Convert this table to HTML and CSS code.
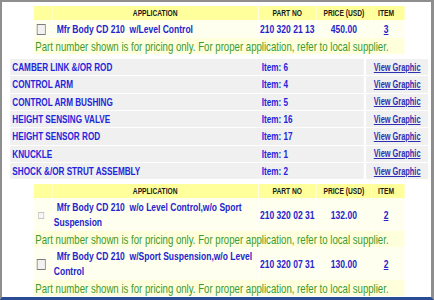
FILE: index.html
```html
<!DOCTYPE html>
<html>
<head>
<meta charset="utf-8">
<link rel="stylesheet" href="styles.css">
</head>
<body>
<div class="frame">
 <div class="squeeze">
  <table class="parts">
    <tr class="head">
      <td class="c-chk"></td>
      <td class="c-app">APPLICATION</td>
      <td class="c-pn">PART NO</td>
      <td class="c-pr">PRICE (USD)</td>
      <td class="c-it">ITEM</td>
    </tr>
    <tr class="prod">
      <td class="c-chk"><span class="box"></span></td>
      <td class="c-app">Mfr Body CD 210&nbsp; w/Level Control</td>
      <td class="c-pn">210 320 21 13</td>
      <td class="c-pr">450.00</td>
      <td class="c-it"><a href="#">3</a></td>
    </tr>
    <tr class="note">
      <td colspan="5">Part number shown is for pricing only. For proper application, refer to local supplier.</td>
    </tr>
  </table>

  <table class="list">
    <tr><td class="l-name">CAMBER LINK &amp;/OR ROD</td><td class="l-item">Item: 6</td><td class="l-view"><a href="#">View Graphic</a></td></tr>
    <tr><td class="l-name">CONTROL ARM</td><td class="l-item">Item: 4</td><td class="l-view"><a href="#">View Graphic</a></td></tr>
    <tr><td class="l-name">CONTROL ARM BUSHING</td><td class="l-item">Item: 5</td><td class="l-view"><a href="#">View Graphic</a></td></tr>
    <tr><td class="l-name">HEIGHT SENSING VALVE</td><td class="l-item">Item: 16</td><td class="l-view"><a href="#">View Graphic</a></td></tr>
    <tr><td class="l-name">HEIGHT SENSOR ROD</td><td class="l-item">Item: 17</td><td class="l-view"><a href="#">View Graphic</a></td></tr>
    <tr><td class="l-name">KNUCKLE</td><td class="l-item">Item: 1</td><td class="l-view"><a href="#">View Graphic</a></td></tr>
    <tr><td class="l-name">SHOCK &amp;/OR STRUT ASSEMBLY</td><td class="l-item">Item: 2</td><td class="l-view"><a href="#">View Graphic</a></td></tr>
  </table>

  <table class="parts second">
    <tr class="head">
      <td class="c-chk"></td>
      <td class="c-app">APPLICATION</td>
      <td class="c-pn">PART NO</td>
      <td class="c-pr">PRICE (USD)</td>
      <td class="c-it">ITEM</td>
    </tr>
    <tr class="prod tall">
      <td class="c-chk"><span class="box faint"></span></td>
      <td class="c-app">Mfr Body CD 210&nbsp; w/o Level Control,w/o Sport Suspension</td>
      <td class="c-pn">210 320 02 31</td>
      <td class="c-pr">132.00</td>
      <td class="c-it"><a href="#">2</a></td>
    </tr>
    <tr class="note">
      <td colspan="5">Part number shown is for pricing only. For proper application, refer to local supplier.</td>
    </tr>
    <tr class="prod tall">
      <td class="c-chk"><span class="box"></span></td>
      <td class="c-app">Mfr Body CD 210&nbsp; w/Sport Suspension,w/o Level Control</td>
      <td class="c-pn">210 320 07 31</td>
      <td class="c-pr">130.00</td>
      <td class="c-it"><a href="#">2</a></td>
    </tr>
    <tr class="note">
      <td colspan="5">Part number shown is for pricing only. For proper application, refer to local supplier.</td>
    </tr>
  </table>
 </div>
</div>
</body>
</html>
```
FILE: styles.css
```css
html, body {
  margin: 0;
  padding: 0;
  background: #ffffff;
}
body {
  font-family: "Liberation Sans", Arial, sans-serif;
}
.frame {
  width: 434px;
  height: 300px;
  box-sizing: border-box;
  border-top: 2px solid #8e8e8e;
  border-left: 2px solid #8e8e8e;
  border-right: 3px solid #8e8e8e;
  border-bottom: 3px solid #2a4c94;
  padding-top: 4px;
  overflow: hidden;
}
/* the reference is horizontally condensed: squeeze the whole content */
.squeeze {
  width: 580px;
  transform: scaleX(0.74);
  transform-origin: 0 0;
}
table {
  border-collapse: separate;
  table-layout: fixed;
}
.parts {
  margin-left: 42px;
  width: 503px;
  border-spacing: 1px 0;
}
.parts td {
  padding: 0;
  box-sizing: border-box;
}
.c-chk { width: 24px; }
.c-app { width: 278px; }
.c-pn { width: 77px; }
.c-pr { width: 74px; }
.c-it { width: 44px; }
.head td {
  background: #ffff9c;
  height: 14px;
  font-weight: bold;
  color: #1a1a1a;
  text-align: center;
  font-size: 9px;
}
.head td.c-it { padding-right: 6px; }
.prod td {
  background: #fffff0;
  height: 18px;
  color: #2424cc;
  font-weight: bold;
  font-size: 11.5px;
  text-align: center;
}
.prod td.c-app {
  text-align: left;
  padding-left: 2px;
  text-indent: 4px;
  line-height: 14.5px;
}
.prod td.c-it { padding-right: 6px; }
.prod.tall td { height: 33px; }
.prod td.c-chk { text-align: left; }
.box {
  display: inline-block;
  width: 10px;
  height: 9px;
  border: 1px solid #7c7c7c;
  background: #f2f2f2;
  margin-left: 4px;
  vertical-align: middle;
}
.box.faint {
  width: 6px;
  height: 5px;
  margin-left: 6px;
  border-color: #c4c4c4;
  background: #f6f6f6;
}
.prod a {
  color: #2424cc;
  text-decoration: underline;
}
.note td {
  background: #ffffdc;
  color: #3d9a2e;
  font-size: 13px;
  height: 16px;
  padding-left: 2px;
}
.list {
  margin-top: 4px;
  margin-left: 11px;
  width: 565px;
  border-spacing: 0 1px;
  font-size: 11px;
  font-weight: bold;
  color: #2424dc;
}
.list td {
  background: #f0f0f0;
  height: 16.33px;
  padding: 0;
  box-sizing: border-box;
}
.l-name { width: 340px; padding-left: 3px !important; }
.l-item { width: 138px; }
.l-view {
  width: 87px;
  border-left: 3px solid #ffffff;
  text-align: center;
  font-size: 10px;
}
.l-view a {
  color: #2e2eb0;
  text-decoration: underline;
}
.second { margin-top: 4px; }
```
